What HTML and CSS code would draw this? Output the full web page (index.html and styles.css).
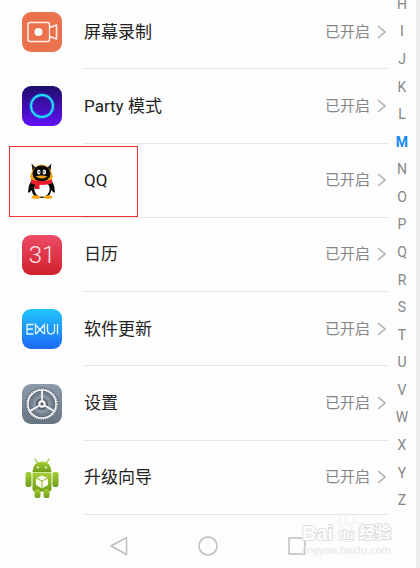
FILE: index.html
```html
<!DOCTYPE html>
<html lang="zh-CN">
<head>
    <meta charset="UTF-8">
    <meta name="viewport" content="width=device-width, initial-scale=1.0">
    <title>应用通知</title>
    <link rel="stylesheet" href="styles.css">
</head>
<body>
    <div class="screen">
        <main class="content">
            <div class="apps">
                <a class="app" href="#record">
                    <svg class="icon" viewBox="0 0 40 40">
                        <rect width="40" height="40" rx="9" fill="#ec724f"/>
                        <path d="M8 10.500h17.500q2 0 2 2v3l7-2.500v14l-7-2.500v3q0 2-2 2H8q-2 0-2-2v-15q0-2 2-2z" fill="none" stroke="#fff1eb" stroke-width="1.500" stroke-linejoin="round"/>
                        <path d="M27.500 15.500v9" stroke="#fff1eb" stroke-width="1.200"/>
                        <circle cx="16.500" cy="20" r="4" fill="#fff"/>
                    </svg>
                    <span class="row">
                        <span class="name">屏幕录制</span>
                        <span class="status">已开启</span>
                        <svg class="arrow" viewBox="0 0 9 14"><path d="M1 1l7 6-7 6"/></svg>
                    </span>
                </a>
                <a class="app" href="#party">
                    <svg class="icon" viewBox="0 0 40 40">
                        <defs>
                            <linearGradient id="party" x2="0" y2="1">
                                <stop offset="0" stop-color="#1d0d69"/>
                                <stop offset="1" stop-color="#6410fa"/>
                            </linearGradient>
                        </defs>
                        <rect width="40" height="40" rx="9" fill="url(#party)"/>
                        <circle cx="20" cy="20" r="11" fill="none" stroke="#2477f0" stroke-width="3.500" opacity=".6"/>
                        <circle cx="20" cy="20" r="11" fill="none" stroke="#22e2fa" stroke-width="1.800"/>
                    </svg>
                    <span class="row">
                        <span class="name">Party 模式</span>
                        <span class="status">已开启</span>
                        <svg class="arrow" viewBox="0 0 9 14"><path d="M1 1l7 6-7 6"/></svg>
                    </span>
                </a>
                <a class="app marked" href="#qq">
                    <svg class="icon" viewBox="0 0 40 40">
                        <path d="M10 3l3 3q7-5 13 0l3-3 0 7 2 6-3 5H11l-3-5 2-6z" fill="#f5a512"/>
                        <path d="M9.500 2.500l4 4-3 2.500zM29.500 2.500l-4 4 3 2.500z" fill="#222"/>
                        <path d="M9 20Q6 25 6 31q1 2 3.500-2Q11 37 19.500 37t10-8q2.500 4 3.500 2 0-6-3-11z" fill="#0b0b0b"/>
                        <ellipse cx="14" cy="36" rx="4.500" ry="1.800" fill="#f6a30d"/>
                        <ellipse cx="26" cy="36" rx="4.500" ry="1.800" fill="#f6a30d"/>
                        <ellipse cx="20" cy="28" rx="7.700" ry="7.700" fill="#fff"/>
                        <ellipse cx="19.500" cy="12.500" rx="9" ry="8" fill="#0b0b0b"/>
                        <ellipse cx="16.800" cy="11" rx="1.700" ry="2.600" fill="#fff"/>
                        <ellipse cx="22.300" cy="11" rx="1.700" ry="2.600" fill="#fff"/>
                        <path d="M17.200 10v2M22 10v2" stroke="#111" stroke-width=".8"/>
                        <path d="M13.500 15.500q6-2 12 0-5.500 4-12 0z" fill="#f6a30d"/>
                        <path d="M9 18.500q10.500 3 21 0v4q-6 1.500-12.500 1.500V28H13v-4.500l-4-1z" fill="#e91c2b"/>
                    </svg>
                    <span class="row">
                        <span class="name">QQ</span>
                        <span class="status">已开启</span>
                        <svg class="arrow" viewBox="0 0 9 14"><path d="M1 1l7 6-7 6"/></svg>
                    </span>
                </a>
                <a class="app" href="#calendar">
                    <span class="icon calendar">31</span>
                    <span class="row">
                        <span class="name">日历</span>
                        <span class="status">已开启</span>
                        <svg class="arrow" viewBox="0 0 9 14"><path d="M1 1l7 6-7 6"/></svg>
                    </span>
                </a>
                <a class="app" href="#update">
                    <svg class="icon" viewBox="0 0 40 40" role="img" aria-label="EMUI">
                        <defs>
                            <linearGradient id="emui" x2="0" y2="1">
                                <stop offset="0" stop-color="#22c5ff"/>
                                <stop offset="1" stop-color="#1b69f3"/>
                            </linearGradient>
                        </defs>
                        <rect width="40" height="40" rx="9" fill="url(#emui)"/>
                        <g fill="none" stroke="#e4f6ff" stroke-width="1.300">
                            <path d="M11.500 15.500H5v9.500h6.500M5 20h6"/>
                            <path d="M13.500 25V15.500l4.500 5.500 4.500-5.500V25M14 25l8-9M18 21l4 4"/>
                            <path d="M25.500 15v6q0 4 3.500 4t3.500-4v-6M35.500 15v10.500"/>
                        </g>
                    </svg>
                    <span class="row">
                        <span class="name">软件更新</span>
                        <span class="status">已开启</span>
                        <svg class="arrow" viewBox="0 0 9 14"><path d="M1 1l7 6-7 6"/></svg>
                    </span>
                </a>
                <a class="app" href="#settings">
                    <svg class="icon" viewBox="0 0 40 40">
                        <defs>
                            <linearGradient id="gear" x2="0" y2="1">
                                <stop offset="0" stop-color="#8c9bac"/>
                                <stop offset="1" stop-color="#667482"/>
                            </linearGradient>
                        </defs>
                        <rect width="40" height="40" rx="9" fill="url(#gear)"/>
                        <circle cx="20" cy="20" r="16.500" fill="#56616d"/>
                        <circle cx="20" cy="20" r="11" fill="#8794a0" stroke="#717e8b" stroke-width="3"/>
                        <circle cx="20" cy="20" r="6" fill="#596571"/>
                        <circle cx="20" cy="20" r="14" fill="none" stroke="#f1f3f5" stroke-width="1.600"/>
                        <circle cx="20" cy="20" r="15.200" fill="none" stroke="#f1f3f5" stroke-width="1.300" stroke-dasharray="1 .8"/>
                        <path d="M20 6v14L8 27M20 20l12 7" fill="none" stroke="#f5f6f7" stroke-width="1.800"/>
                        <circle cx="20" cy="20" r="2.700" fill="#5c6874" stroke="#fff" stroke-width="2"/>
                    </svg>
                    <span class="row">
                        <span class="name">设置</span>
                        <span class="status">已开启</span>
                        <svg class="arrow" viewBox="0 0 9 14"><path d="M1 1l7 6-7 6"/></svg>
                    </span>
                </a>
                <a class="app" href="#guide">
                    <svg class="icon" viewBox="0 0 40 40">
                        <defs>
                            <linearGradient id="robot" x2="0" y2="1">
                                <stop offset="0" stop-color="#a5cf36"/>
                                <stop offset="1" stop-color="#6f9e18"/>
                            </linearGradient>
                        </defs>
                        <path d="M13 1l3 5M27 1l-3 5" stroke="#9ac339" stroke-width="1.300" stroke-linecap="round"/>
                        <g fill="url(#robot)">
                            <path d="M10.500 14Q11 3.500 20 3.500T29.500 14z"/>
                            <path d="M10.500 14.500h19v16.500q0 2.500-2.500 2.500H13q-2.500 0-2.500-2.500z"/>
                            <rect x="3.500" y="14" width="6" height="15" rx="2"/>
                            <rect x="30.500" y="14" width="6" height="15" rx="2"/>
                            <rect x="12.500" y="31" width="6" height="9" rx="2.500"/>
                            <rect x="21.500" y="31" width="6" height="9" rx="2.500"/>
                        </g>
                        <circle cx="16" cy="9.500" r="1" fill="#fff"/>
                        <circle cx="24" cy="9.500" r="1" fill="#fff"/>
                        <path d="M20 17.500l6 2.500v7L20 30.500 14 27v-7z" fill="#f8fbed"/>
                        <path d="M14 20l6 3 6-3M20 23v7.500" fill="none" stroke="#8db62c"/>
                    </svg>
                    <span class="row">
                        <span class="name">升级向导</span>
                        <span class="status">已开启</span>
                        <svg class="arrow" viewBox="0 0 9 14"><path d="M1 1l7 6-7 6"/></svg>
                    </span>
                </a>
            </div>
            <nav class="letters">
                <a href="#H">H</a>
                <a href="#I">I</a>
                <a href="#J">J</a>
                <a href="#K">K</a>
                <a href="#L">L</a>
                <a class="current" href="#M">M</a>
                <a href="#N">N</a>
                <a href="#O">O</a>
                <a href="#P">P</a>
                <a href="#Q">Q</a>
                <a href="#R">R</a>
                <a href="#S">S</a>
                <a href="#T">T</a>
                <a href="#U">U</a>
                <a href="#V">V</a>
                <a href="#W">W</a>
                <a href="#X">X</a>
                <a href="#Y">Y</a>
                <a href="#Z">Z</a>
            </nav>
        </main>
        <footer class="navbar">
            <button type="button" aria-label="返回">
                <svg viewBox="0 0 20 20"><path d="M17.500 1.500v17L2 10z"/></svg>
            </button>
            <button type="button" aria-label="主屏幕">
                <svg viewBox="0 0 20 20"><circle cx="10" cy="10" r="9"/></svg>
            </button>
            <button type="button" aria-label="最近任务">
                <svg viewBox="0 0 20 20"><path d="M2 2h16v16H2z"/></svg>
            </button>
        </footer>
        <div class="watermark">
            <div class="brand">
                <span class="bai">Bai</span>
                <span class="paw">
                    <svg viewBox="0 0 28 30">
                        <ellipse cx="4.500" cy="13" rx="3.300" ry="4.300"/>
                        <ellipse cx="10.500" cy="6" rx="3.300" ry="4.700"/>
                        <ellipse cx="18.500" cy="6" rx="3.300" ry="4.700"/>
                        <ellipse cx="24" cy="13" rx="3.300" ry="4.300"/>
                        <path d="M14 12q3 0 5 4 2 3 5 5 3 4 0 6.500-2 2-10 1.500-8 .5-10-1.500-3-2.500 0-6.500 3-2 5-5 2-4 5-4z"/>
                    </svg>
                    <span class="du">du</span>
                </span>
                <span class="jingyan">经验</span>
            </div>
            <div class="site">jingyan.baidu.com</div>
        </div>
    </div>
</body>
</html>
```
FILE: styles.css
```css
* {
    box-sizing: border-box;
}
body {
    margin: 0;
    background-color: #eeeeee;
    font-family: Roboto, "Noto Sans CJK SC", sans-serif;
}
a {
    color: inherit;
    text-decoration: none;
}
.screen {
    position: relative;
    display: flex;
    flex-direction: column;
    height: 100vh;
    margin-right: 4px;
    overflow: hidden;
    background-color: #fdfdfd;
}
/* the list is scrolled a little past its first row */
.content {
    flex: 1;
    display: flex;
    margin-top: -5px;
}
.apps {
    flex: 1;
    display: grid;
    grid-auto-rows: 1fr;
}
.app {
    position: relative;
    display: flex;
    align-items: center;
    gap: 21px;
    padding-left: 22px;
}
.icon {
    flex: none;
    width: 40px;
    height: 40px;
}
.calendar {
    border-radius: 9px;
    background: linear-gradient(#ec4c67, #d0202c);
    color: #ffe9e9;
    font-size: 24px;
    font-weight: 300;
    line-height: 40px;
    text-align: center;
}
.row {
    flex: 1;
    align-self: stretch;
    display: flex;
    align-items: center;
    border-bottom: 1px solid #e6e6e6;
}
.name {
    flex: 1;
    padding-left: 1px;
    color: #222222;
    font-size: 17px;
    line-height: 24px;
}
.status {
    color: #868686;
    font-size: 15px;
    line-height: 20px;
}
.arrow {
    width: 9px;
    height: 14px;
    margin: 0 2px 0 7px;
    fill: none;
    stroke: #b0b0b0;
    stroke-width: 1.5;
}
.marked::after {
    content: "";
    position: absolute;
    box-sizing: border-box;
    top: 2px;
    left: 9px;
    width: 129px;
    height: 71px;
    border: 1px solid #ee3535;
}
.letters {
    display: grid;
    grid-auto-rows: 1fr;
    width: 28px;
    margin: -5px 0 1px;
    color: #868686;
    font-size: 14px;
    line-height: 16px;
    text-align: center;
}
.letters a {
    align-self: center;
}
.letters .current {
    color: #1688f5;
    font-weight: bold;
}
.navbar {
    display: flex;
    justify-content: center;
    align-items: center;
    gap: 69px;
    height: 53px;
    padding: 8px 0 0;
}
.navbar button {
    width: 20px;
    height: 20px;
    padding: 0;
    border: 0;
    background: none;
}
.navbar svg {
    display: block;
    fill: none;
    stroke: #bdbdbd;
    stroke-width: 1.5;
    stroke-linejoin: round;
}
.watermark {
    position: absolute;
    right: 24px;
    bottom: 11px;
    width: 90px;
    color: #fdfdfd;
    font-family: "Liberation Sans", "Noto Sans CJK SC", sans-serif;
}
.brand {
    display: flex;
    align-items: flex-end;
    font-weight: bold;
    line-height: 20px;
    -webkit-text-stroke: 2px #dddddd;
    paint-order: stroke fill;
}
.bai {
    width: 31px;
    font-size: 20px;
}
.paw {
    position: relative;
    width: 26px;
    height: 30px;
}
.paw svg {
    display: block;
    width: 26px;
    height: 30px;
    fill: #fdfdfd;
    stroke: #dddddd;
}
.du {
    position: absolute;
    top: 12px;
    left: 6px;
    font-size: 12px;
}
.jingyan {
    font-size: 16px;
}
.site {
    color: #e6e6e6;
    font-size: 11px;
    line-height: 14px;
}
```
